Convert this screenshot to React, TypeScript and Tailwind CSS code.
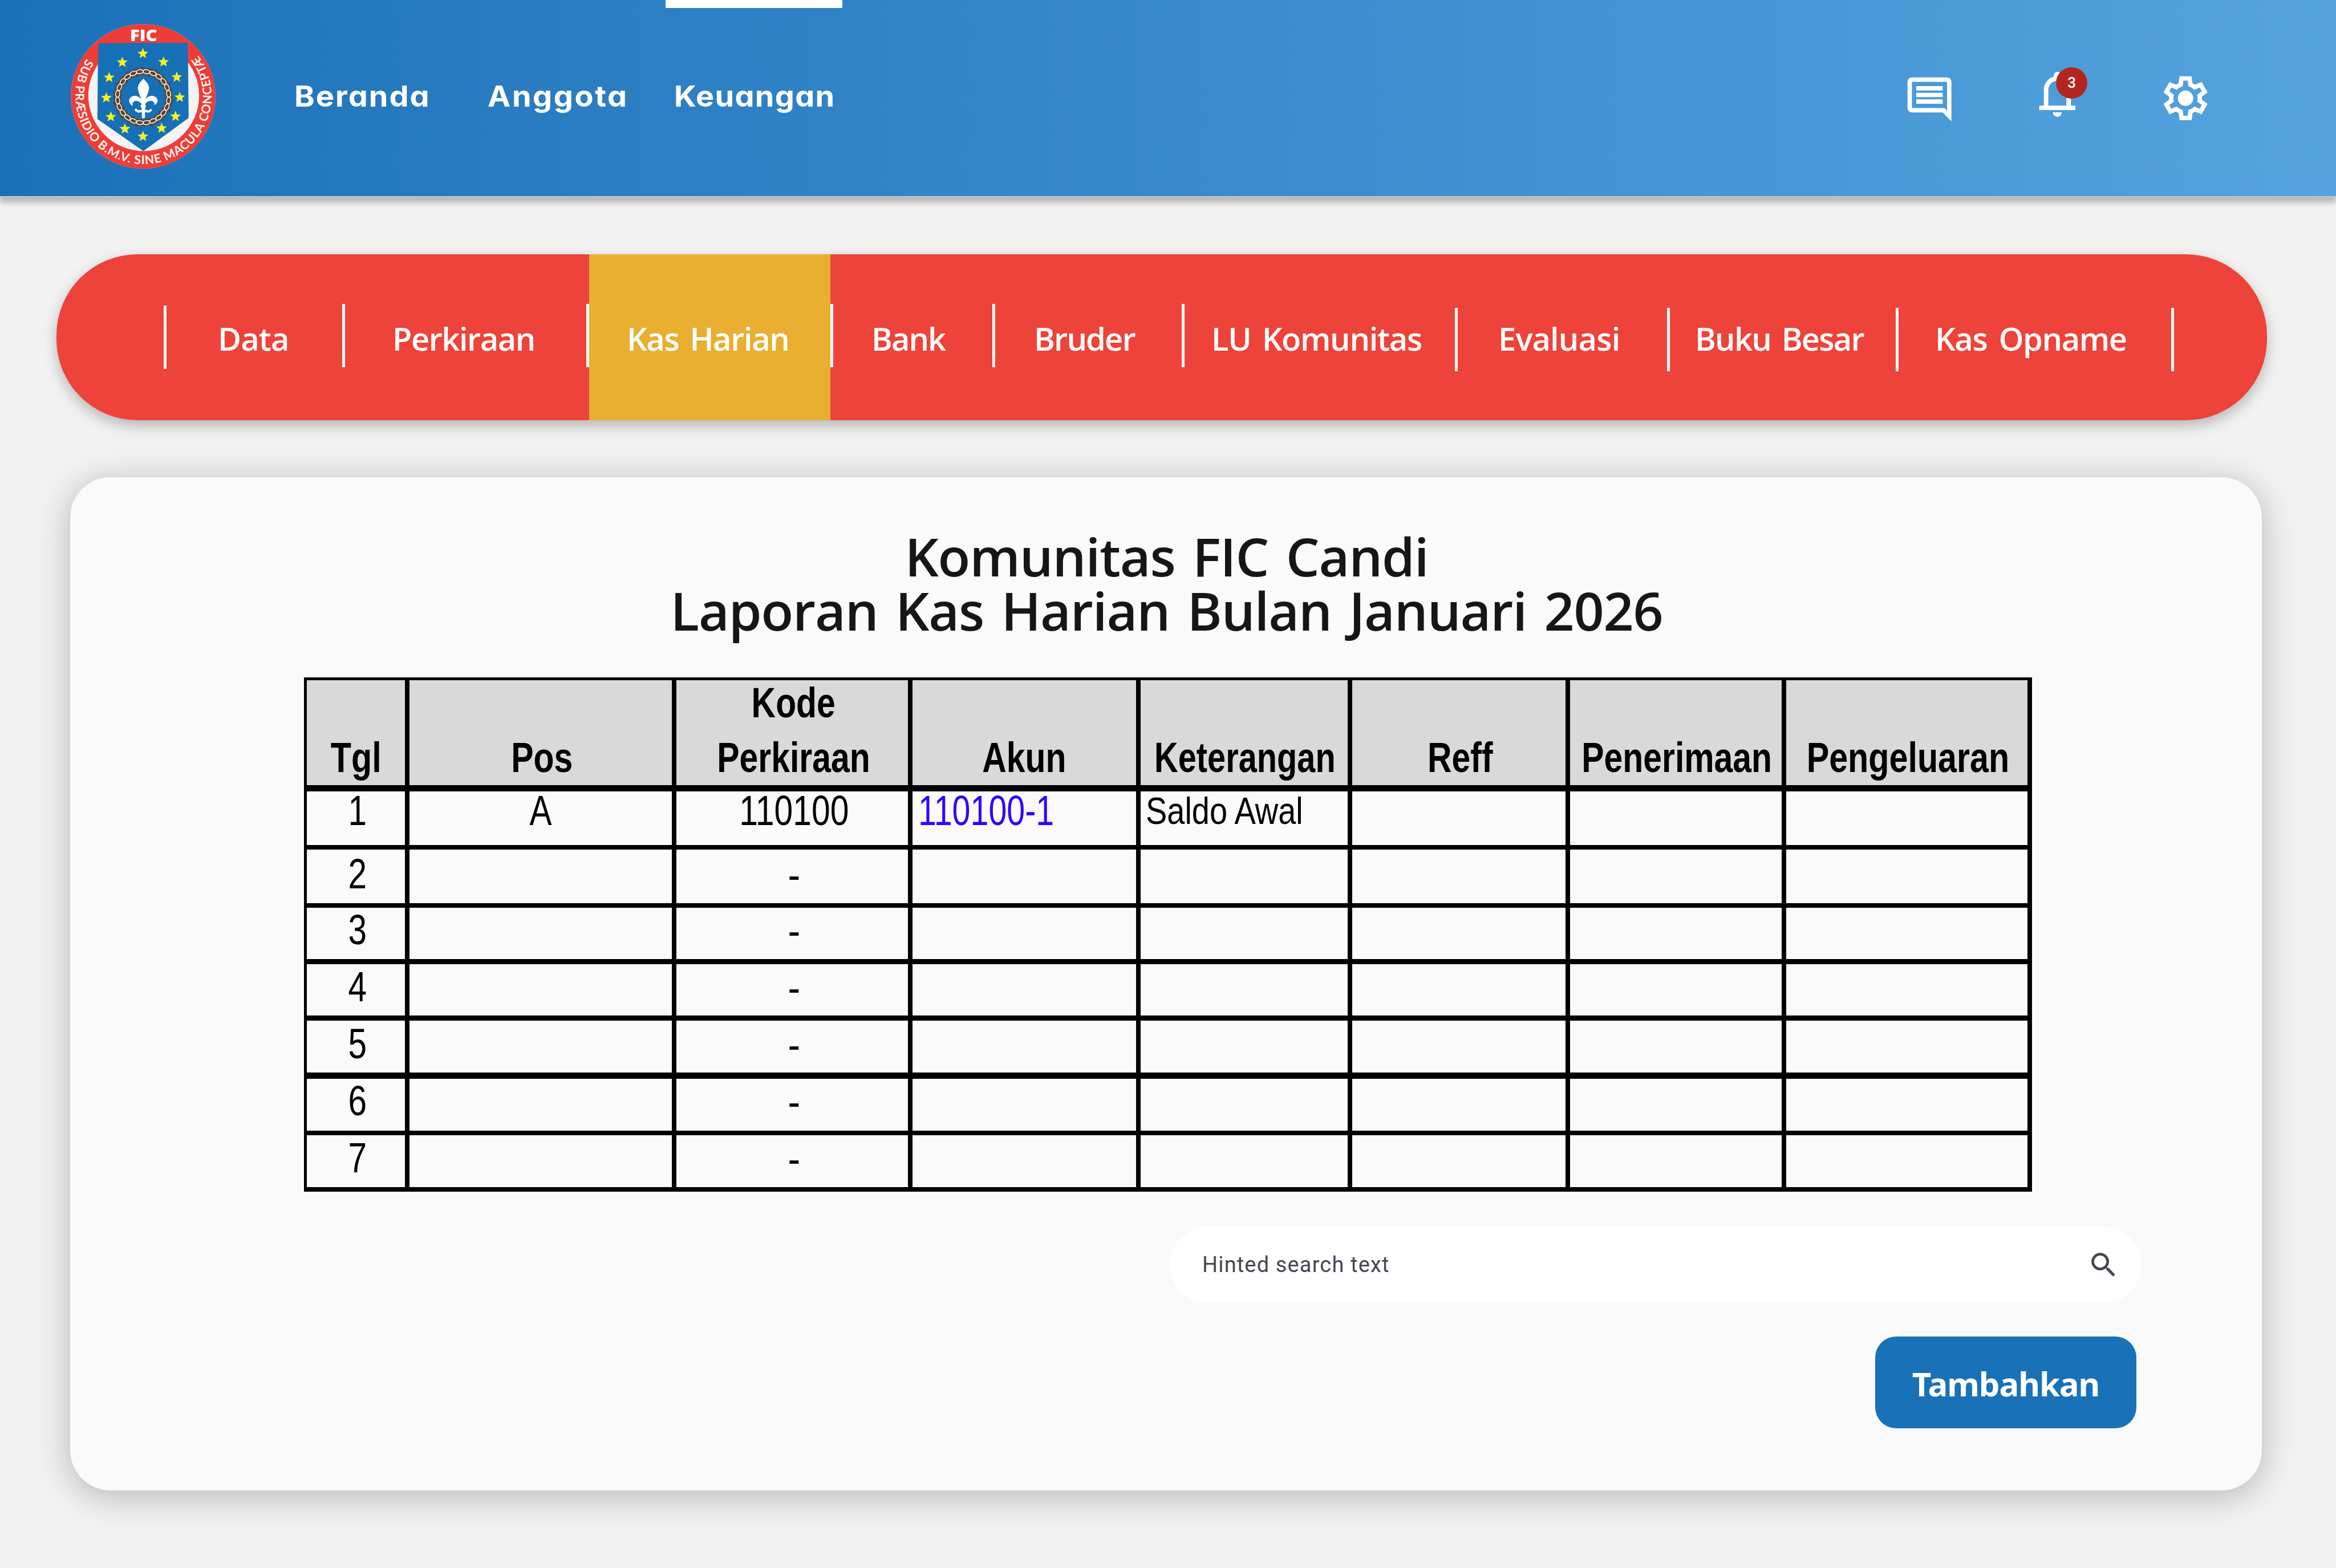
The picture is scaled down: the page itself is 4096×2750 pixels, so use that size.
import React from "react";
import clsx from "clsx";

const STAR_CENTERS: [number, number][] = [
  [731, 355], [548, 433], [914, 430], [431, 568], [1032, 565], [406, 748],
  [1058, 744], [446, 917], [1020, 913], [571, 1024], [897, 1018], [731, 1091],
];

function starPoints(cx: number, cy: number) {
  return Array.from({ length: 10 }, (_, i) => {
    const r = i % 2 === 0 ? 50 : 22;
    const a = (-90 + i * 36) * (Math.PI / 180);
    return `${(cx + r * Math.cos(a)).toFixed(1)},${(cy + r * Math.sin(a)).toFixed(1)}`;
  }).join(" ");
}

const LINKS = Array.from({ length: 24 }, (_, i) => 7.5 + i * 15);
const OUTER_THORNS = [-2, 28, 63, 98, 118, 140, 163, 193, 228, 259, 280, 297, 327];
const INNER_THORNS = [15, 50, 84, 130, 170, 205, 240, 274, 312, 345];

function Logo() {
  return (
    <svg viewBox="90 92 1286 1286" className="mt-[42px] ml-[124px] size-[254px] shrink-0">
      <defs>
        <path id="motto" d="M231 400 A605 605 0 1 0 1228 380" />
        <clipPath id="lower">
          <rect x="90" y="300" width="1286" height="1078" />
        </clipPath>
      </defs>
      <circle cx="733" cy="735" r="642" fill="#ee3d36" stroke="#9f86a0" strokeWidth="3" />
      <circle cx="738" cy="728" r="492" fill="#f5f3f3" clipPath="url(#lower)" />
      <path d="M336 263 L1128 259 L1132 455 L1137 926 L735 1221 L327 936 L331 460 Z" fill="#1570b8" />
      {STAR_CENTERS.map(([x, y]) => (
        <polygon key={`${x}-${y}`} points={starPoints(x, y)} fill="#f9ef20" />
      ))}
      <g transform="translate(733 742)">
        <g fill="#5b432f">
          {OUTER_THORNS.map((a) => (
            <path key={a} d="M-14 -252 L-3 -277 L14 -252 Z" transform={`rotate(${a})`} />
          ))}
          {INNER_THORNS.map((a) => (
            <path key={a} d="M-12 -204 L4 -182 L12 -204 Z" transform={`rotate(${a})`} />
          ))}
        </g>
        <circle r="228" fill="none" stroke="#5b432f" strokeWidth="62" />
        <g fill="none" stroke="#f8f1ea" strokeWidth="8">
          {LINKS.map((a) => (
            <ellipse key={a} cx="0" cy="-228" rx="32" ry="18" transform={`rotate(${a})`} />
          ))}
        </g>
      </g>
      <g fill="#ffffff">
        <path d="M735 575 C748 598 785 618 785 662 C785 708 750 742 748 800 L722 800 C720 742 686 708 686 662 C686 618 722 598 735 575 Z" />
        <path d="M726 778 C706 738 672 726 645 732 C602 742 594 792 640 819 C634 782 656 772 678 776 C702 782 716 794 724 812 Z" />
        <path d="M744 778 C764 738 798 726 825 732 C868 742 876 792 832 813 C838 782 814 772 792 776 C768 782 754 794 746 812 Z" />
        <circle cx="734" cy="822" r="23" />
        <rect x="722" y="790" width="27" height="140" rx="13" />
      </g>
      <path d="M669 855 Q684 874 712 866 Q735 852 758 866 Q786 874 800 858" fill="none" stroke="#ffffff" strokeWidth="21" strokeLinecap="round" />
      <text x="616" y="245" textLength="242" lengthAdjust="spacingAndGlyphs" fill="#ffffff" className="font-['Open_Sans'] text-[144px] font-extrabold">
        FIC
      </text>
      <text fill="#fdf3f0" className="font-['Lato'] text-[108px] font-bold">
        <textPath href="#motto" textLength="2640" lengthAdjust="spacing">
          SUB PRÆSIDIO B.M.V. SINE MACULA CONCEPTÆ
        </textPath>
      </text>
    </svg>
  );
}

function ChatIcon() {
  return (
    <svg viewBox="0 0 24 24" fill="currentColor" className="mt-[128px] size-[92.4px]">
      <path d="M22 4c0-1.1-.9-2-2-2H4c-1.1 0-2 .9-2 2v12c0 1.1.9 2 2 2h14l4 4V4zm-2 0v13.17L18.83 16H4V4h16zM6 12h12v2H6zm0-3h12v2H6zm0-3h12v2H6z" />
    </svg>
  );
}

function BellIcon() {
  return (
    <svg viewBox="0 0 24 24" fill="currentColor" className="size-[94.8px]">
      <path d="M4 19v-2h2v-7q0-2.075 1.25-3.6875T10.5 4.2v-.7q0-.625.4375-1.0625T12 2t1.0625.4375T13.5 3.5v.7q2 .5 3.25 2.1125T18 10v7h2v2H4Zm8 3q-.825 0-1.4125-.5875T10 20h4q0 .825-.5875 1.4125T12 22Zm-4-5h8v-7q0-1.65-1.175-2.825T12 6q-1.65 0-2.825 1.175T8 10v7Z" />
    </svg>
  );
}

function GearIcon() {
  return (
    <svg viewBox="0 0 24 24" fill="currentColor" className="mt-[125.6px] ml-[130.6px] size-[92.4px]">
      <path
        fillRule="evenodd"
        d="M9.25 22l-.4-3.2q-.325-.125-.612-.3t-.563-.375L4.7 19.375l-2.75-4.75l2.575-1.95Q4.5 12.5 4.5 12.338v-.675q0-.163.025-.338L1.95 9.375l2.75-4.75l2.975 1.25q.275-.2.575-.375t.6-.3l.4-3.2h5.5l.4 3.2q.325.125.613.3t.562.375l2.975-1.25l2.75 4.75l-2.575 1.95q.025.175.025.338v.674q0 .163-.05.338l2.575 1.95l-2.75 4.75l-2.95-1.25q-.275.2-.575.375t-.6.3l-.4 3.2zM11 20h1.975l.35-2.65q.775-.2 1.438-.587t1.212-.938l2.475 1.025l.975-1.7l-2.15-1.625q.125-.35.175-.737T17.5 12t-.05-.787t-.175-.738l2.15-1.625l-.975-1.7l-2.475 1.05q-.55-.575-1.212-.962t-1.438-.588L13 4h-1.975l-.35 2.65q-.775.2-1.437.588t-1.213.937L5.55 7.15l-.975 1.7l2.15 1.6q-.125.375-.175.75t-.05.8q0 .4.05.775t.175.75l-2.15 1.625l.975 1.7l2.475-1.05q.55.575 1.213.963t1.437.587z"
      />
      <circle cx="12" cy="12" r="3.5" />
    </svg>
  );
}

function Header() {
  return (
    <header className="h-[346px] shrink-0 border-b-[2.4px] border-[#c8c8c8] bg-linear-to-r from-[#1a71b8] to-[#54a3df] bg-origin-border shadow-[0_9.5px_9.5px_rgba(0,0,0,0.25)]">
      <div className="flex h-full items-start text-white">
        <Logo />
        <nav className="ml-[138px] flex h-[338px] items-center font-['Inter'] text-[51px] font-bold [font-feature-settings:'cv11']">
          <a className="w-[339px]">
            <span className="inline-block origin-left scale-x-[1.06] tracking-[1.9px]">Beranda</span>
          </a>
          <a className="w-[312px]">
            <span className="inline-block origin-left scale-x-[1.06] tracking-[2.4px]">Anggota</span>
          </a>
          <a className="relative flex h-full w-[310px] items-center pl-[15px]">
            <span className="absolute inset-x-0 top-0 h-[14px] bg-white" />
            <span className="inline-block origin-left scale-x-[1.06] tracking-[1.2px]">Keuangan</span>
          </a>
        </nav>
        <div className="mr-[218px] ml-auto flex items-start">
          <ChatIcon />
          <div className="relative mt-[118.4px] ml-[130.6px]">
            <BellIcon />
            <span className="absolute top-0 left-[45.2px] flex size-[54.5px] items-center justify-center rounded-full bg-[#b3261e] font-['Roboto'] text-[26px] font-medium">
              3
            </span>
          </div>
          <GearIcon />
        </div>
      </div>
    </header>
  );
}

const TABS = [
  { label: "Data", box: "w-[313px]", line: "mt-[90px]", text: "pl-[90px] tracking-[-0.9px]" },
  { label: "Perkiraan", box: "w-[428px]", line: "mt-[87px]", text: "pl-[83px] tracking-[-1.5px]" },
  { label: "Kas Harian", box: "w-[428px]", line: "mt-[87px]", text: "pl-[66px] tracking-[-1.4px] [word-spacing:6px]", active: true },
  { label: "Bank", box: "w-[284px]", line: "mt-[87px]", text: "pl-[67px] tracking-[-2px]" },
  { label: "Bruder", box: "w-[332px]", line: "mt-[87px]", text: "pl-[68px] tracking-[-1.85px]" },
  { label: "LU Komunitas", box: "w-[479px]", line: "mt-[87px]", text: "pl-[47px] tracking-[-1.3px] [word-spacing:6px]" },
  { label: "Evaluasi", box: "w-[372px]", line: "mt-[94px]", text: "pl-[71px] tracking-[-0.85px]" },
  { label: "Buku Besar", box: "w-[401px]", line: "mt-[94px]", text: "pl-[44px] tracking-[-1.8px] [word-spacing:6px]" },
  { label: "Kas Opname", box: "w-[483px]", line: "mt-[94px]", text: "pl-[64px] tracking-[-1.4px] [word-spacing:7px]" },
];

function TabBar() {
  return (
    <nav className="mt-[100px] ml-[99px] flex h-[291px] w-[3876px] shrink-0 rounded-[142px] bg-[#ee433a] pl-[188px] font-['Open_Sans'] text-[56px] font-semibold text-white shadow-[0_9.5px_23.7px_rgba(0,0,0,0.25)]">
      {TABS.map((t) => (
        <div key={t.label} className={clsx("flex", t.box)}>
          <span className={clsx("h-[111px] w-[5px] shrink-0 bg-white", t.line)} />
          <a className={clsx("flex grow items-center pt-[2px] whitespace-nowrap", t.text, t.active && "bg-[#e8af30]")}>{t.label}</a>
        </div>
      ))}
      <span className="mt-[94px] h-[111px] w-[5px] bg-white" />
    </nav>
  );
}

const HEADINGS = [
  { lines: ["Tgl"], fit: "scale-x-[0.79]" },
  { lines: ["Pos"], fit: "pl-[6px] scale-x-[0.785]" },
  { lines: ["Kode", "Perkiraan"], fit: "pl-[5px] scale-x-[0.785]" },
  { lines: ["Akun"], fit: "scale-x-[0.785]" },
  { lines: ["Keterangan"], fit: "pl-[4px] scale-x-[0.77]" },
  { lines: ["Reff"], fit: "pl-[6px] scale-x-[0.785]" },
  { lines: ["Penerimaan"], fit: "pl-[4px] scale-x-[0.785]" },
  { lines: ["Pengeluaran"], fit: "pl-[6px] scale-x-[0.79]" },
];

const ROWS = [
  { n: "1", box: "h-[102px] border-b-8", text: "-mt-[4px]", pos: "A", kode: "110100", akun: "110100-1", ket: "Saldo Awal" },
  { n: "2", box: "h-[102px] border-b-8", text: "mt-[5px]" },
  { n: "3", box: "h-[99px] border-b-9", text: "mt-[1px]" },
  { n: "4", box: "h-[99px] border-b-9", text: "mt-[2px]" },
  { n: "5", box: "h-[102px] border-b-11", text: "mt-[3px]" },
  { n: "6", box: "h-[99px] border-b-8", text: "mt-[1px]" },
  { n: "7", box: "h-[99px] border-b-8", text: "mt-[2px]" },
];

const CELL = "flex min-w-0 border-r-8 border-black whitespace-nowrap";

function LedgerTable() {
  return (
    <div className="mt-[72px] ml-[410px] w-[3030px] border-t-[5px] border-l-[5px] border-black font-['Liberation_Sans'] text-[75px] text-black">
      <div className="grid h-[195px] grid-cols-[180px_468px_414px_400px_371px_382px_379px_431px] grid-rows-[184px] border-b-11 border-black bg-[#d9d9d9]">
        {HEADINGS.map((h) => (
          <div key={h.lines[0]} className="flex min-w-0 flex-col items-center justify-end border-r-8 border-black pb-px font-bold whitespace-nowrap">
            {h.lines.map((l) => (
              <span key={l} className={clsx("inline-block leading-[96px]", h.fit)}>{l}</span>
            ))}
          </div>
        ))}
      </div>
      {ROWS.map((r) => (
        <div key={r.n} className={clsx("grid grid-cols-[180px_468px_414px_400px_371px_382px_379px_431px] border-black leading-[75px]", r.box)}>
          <div className={clsx(CELL, "justify-center pl-[6px]")}>
            <span className={clsx("inline-block h-[75px] scale-x-[0.78]", r.text)}>{r.n}</span>
          </div>
          <div className={clsx(CELL, "justify-center")}>
            <span className={clsx("inline-block h-[75px] scale-x-[0.78]", r.text)}>{r.pos}</span>
          </div>
          <div className={clsx(CELL, "justify-center pl-[7px]")}>
            <span className={clsx("inline-block h-[75px]", r.kode ? "scale-x-[0.785]" : "scale-x-[0.87] pt-[2px]", r.text)}>{r.kode ?? "-"}</span>
          </div>
          <div className={clsx(CELL, "pl-[10px] text-[#2f00ff]")}>
            <span className={clsx("inline-block h-[75px] origin-left scale-x-[0.765]", r.text)}>{r.akun}</span>
          </div>
          <div className={clsx(CELL, "pl-[9px] text-[67px]")}>
            <span className={clsx("inline-block h-[75px] origin-left scale-x-[0.835]", r.text)}>{r.ket}</span>
          </div>
          <div className={CELL} />
          <div className={CELL} />
          <div className={CELL} />
        </div>
      ))}
    </div>
  );
}

function SearchBar() {
  return (
    <div className="mt-[62px] mr-[211px] flex h-[133px] w-[1704px] items-center justify-between self-end rounded-full bg-white pr-[38px] pl-[57px] text-[#49454f]">
      <span className="font-['Roboto'] text-[37.9px] tracking-[1.2px]">Hinted search text</span>
      <svg viewBox="0 0 24 24" fill="currentColor" className="size-[57px]">
        <path d="M15.5 14h-.79l-.28-.27A6.471 6.471 0 0 0 16 9.5 6.5 6.5 0 1 0 9.5 16c1.61 0 3.09-.59 4.23-1.57l.27.28v.79l5 4.99L20.49 19l-4.99-5zm-6 0C7.01 14 5 11.99 5 9.5S7.01 5 9.5 5 14 7.01 14 9.5 11.99 14 9.5 14z" />
      </svg>
    </div>
  );
}

export default function App() {
  return (
    <div className="flex h-[2750px] w-[4096px] flex-col overflow-hidden bg-[#f2f2f2]">
      <Header />
      <TabBar />
      <main className="mt-[100px] ml-[123px] flex h-[1777px] w-[3843px] shrink-0 flex-col rounded-[71px] bg-[#fafafa] pt-[91px] shadow-[0_9.5px_59px_rgba(0,0,0,0.25)]">
        <h1 className="-mb-[2px] pl-[2px] text-center font-['Open_Sans'] text-[93px] leading-[95px] font-semibold tracking-[-1.2px] text-[#161616] [word-spacing:7.5px]">
          Komunitas FIC Candi
          <br />
          Laporan Kas Harian Bulan Januari 2026
        </h1>
        <LedgerTable />
        <SearchBar />
        <button className="mt-[59px] mr-[220px] h-[161px] w-[458px] self-end rounded-[37px] bg-[#1971b8] pt-[3px] font-['Noto_Sans'] text-[58px] font-bold tracking-[-1px] text-white">
          Tambahkan
        </button>
      </main>
    </div>
  );
}
